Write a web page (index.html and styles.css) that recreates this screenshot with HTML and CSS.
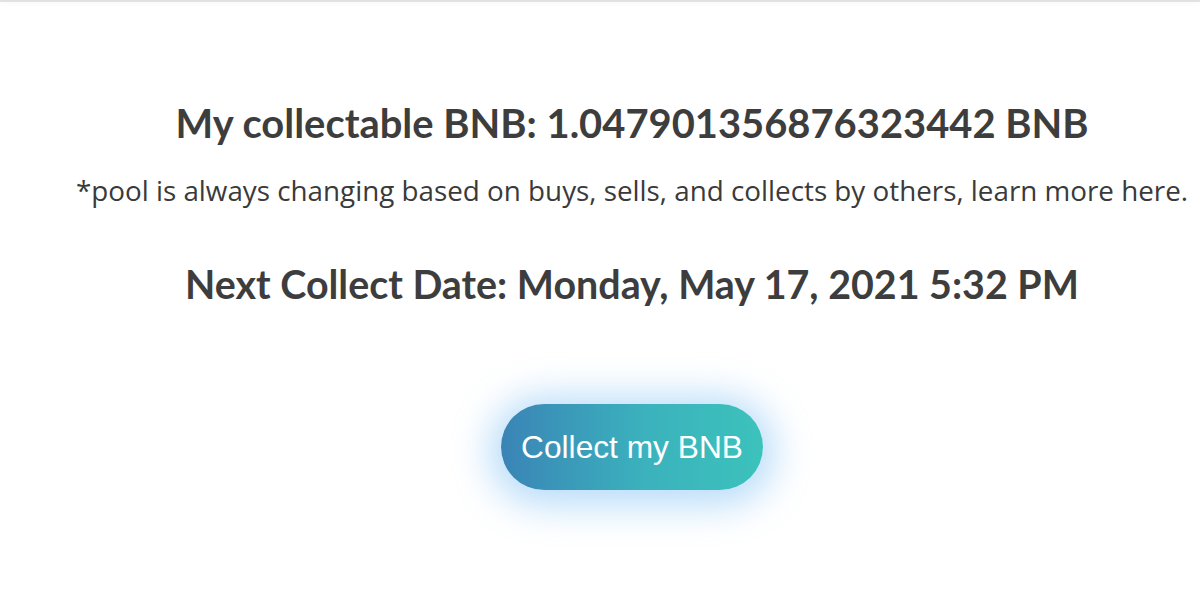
FILE: index.html
```html
<!DOCTYPE html>
<html lang="en">
<head>
<meta charset="utf-8">
<title>Collect BNB</title>
<link rel="stylesheet" href="styles.css">
</head>
<body>
<div class="topbar"></div>
<main class="collect">
  <h2 class="amount">My collectable BNB: 1.047901356876323442 BNB</h2>
  <p class="note">*pool is always changing based on buys, sells, and collects by others, learn more here.</p>
  <h2 class="date">Next Collect Date: Monday, May 17, 2021 5:32 PM</h2>
  <button class="collect-btn" type="button">Collect my BNB</button>
</main>
</body>
</html>
```
FILE: styles.css
```css
html, body {
  margin: 0;
  padding: 0;
  background: #ffffff;
}

body {
  overflow: hidden;
}

.topbar {
  height: 2px;
  background: #e2e2e2;
  box-shadow: 0 1px 6px rgba(0, 0, 0, 0.06);
}

.collect {
  display: flex;
  flex-direction: column;
  align-items: center;
  padding: 0 0 120px 64px;
  color: #3d3d3d;
}

.amount,
.date {
  margin: 0;
  font-family: "Lato", sans-serif;
  font-weight: 700;
  line-height: 50px;
  white-space: nowrap;
}

.amount {
  margin-top: 96px;
  font-size: 39.9px;
}

.note {
  margin: 24px 0 0;
  font-family: "Open Sans", sans-serif;
  font-size: 27.8px;
  line-height: 36px;
  color: #3a3a3a;
  white-space: nowrap;
}

.date {
  margin-top: 51px;
  font-size: 39.4px;
}

.collect-btn {
  margin-top: 95px;
  width: 262px;
  height: 86px;
  border: 0;
  border-radius: 43px;
  background: linear-gradient(90deg, #3a84b6 0%, #3bb2bd 55%, #3cc2bc 100%);
  color: #ffffff;
  font-family: "Liberation Sans", Arial, sans-serif;
  font-size: 31.7px;
  box-shadow: 0 4px 36px 12px rgba(90, 175, 240, 0.42);
  cursor: pointer;
}
```
